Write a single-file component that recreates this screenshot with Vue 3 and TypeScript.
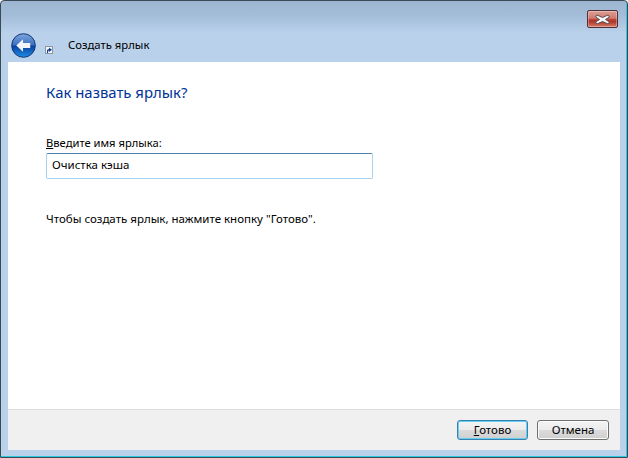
<script setup lang="ts">
const title = 'Создать ярлык'
</script>

<template>
  <div class="window">
    <header class="chrome-top">
      <div class="caption">
        <button class="close" aria-label="Закрыть">
          <svg width="17" height="11" viewBox="0 0 17 11">
            <path d="M3 1 L8.5 3.5 L14 1 L15.5 3 L11.5 5.5 L15.5 8 L14 10 L8.5 7.5 L3 10 L1.5 8 L5.5 5.5 L1.5 3 Z" fill="#f4f6f8" stroke="#5b4a52" stroke-width="1" />
          </svg>
        </button>
      </div>
      <div class="nav">
        <svg class="back" width="25" height="25" viewBox="0 0 26 26">
          <defs>
            <linearGradient id="orb" x1="0" y1="0" x2="0" y2="1">
              <stop offset="0" stop-color="#7fa6dc" />
              <stop offset="0.48" stop-color="#3b6fc0" />
              <stop offset="0.52" stop-color="#0a3f9c" />
              <stop offset="1" stop-color="#1f8fe8" />
            </linearGradient>
          </defs>
          <circle cx="13" cy="13" r="12.3" fill="url(#orb)" stroke="#14356f" stroke-width="1" />
          <path d="M5.5 13 L12.5 6.5 V10.5 H20 V15.5 H12.5 V19.5 Z" fill="#f2f6fb" />
        </svg>
        <svg class="shortcut" width="8" height="8" viewBox="0 0 8 8">
          <rect x="0.5" y="0.5" width="7" height="7" fill="#f4f6f8" stroke="#8a96a6" />
          <path d="M2 7 V4.5 Q2 3 4 3 V1.5 L7 3.8 L4 6 V4.6 Q3 4.6 3 7 Z" fill="#17408f" />
        </svg>
        <span class="title">{{ title }}</span>
      </div>
    </header>

    <main class="content">
      <h1 class="heading">Как назвать ярлык?</h1>
      <label class="field-label"><u>В</u>ведите имя ярлыка:</label>
      <div class="input">Очистка кэша</div>
      <p class="hint">Чтобы создать ярлык, нажмите кнопку "Готово".</p>
    </main>

    <footer class="footer">
      <button class="btn primary"><u>Г</u>отово</button>
      <button class="btn">Отмена</button>
    </footer>
  </div>
</template>

<style>
html, body { margin: 0; padding: 0; overflow: hidden; background: #fff; }
</style>

<style scoped>
.window {
  width: 628px;
  height: 458px;
  box-sizing: border-box;
  display: flex;
  flex-direction: column;
  position: relative;
  background: linear-gradient(#9db7d2 0, #a3bcd8 14px, #b9d1ea 32px, #b9d1ea 100%);
  border: 1px solid #3a4a55;
  border-radius: 4px 4px 0 0;
  box-shadow: inset -1px -1px 0 #2cc8e2;
  padding: 0 7px 7px 7px;
  font-family: "Noto Sans", "Open Sans", sans-serif;
  font-size: 11.5px;
  color: #000;
}
.chrome-top {
  height: 61px;
  flex: none;
  display: flex;
  flex-direction: column;
}
.caption {
  display: flex;
  justify-content: flex-end;
  height: 23px;
  padding-top: 9px;
  padding-right: 2px;
  flex: none;
}
.close {
  width: 31px;
  height: 18px;
  padding: 0;
  box-sizing: border-box;
  border: 1px solid #4f2f38;
  border-radius: 2px;
  background: linear-gradient(#dc9f95 0, #d17a6c 45%, #b6392b 55%, #b23b2e 70%, #d8806e 100%);
  box-shadow: inset 0 0 0 1px rgba(255, 255, 255, 0.3);
  display: flex;
  align-items: center;
  justify-content: center;
}
.nav {
  display: flex;
  align-items: center;
  height: 25px;
  margin-left: 3px;
}
.back { flex: none; }
.shortcut { flex: none; margin-left: 9px; margin-top: 9px; }
.title {
  margin-left: 15px;
  margin-bottom: 2px;
  line-height: 16px;
  font-size: 11.3px;
}
.content {
  flex: 1;
  background: #fff;
  padding: 20px 38px 0 38px;
  min-height: 0;
}
.heading {
  margin: 0;
  font-weight: 400;
  font-size: 14.9px;
  line-height: 20px;
  color: #003399;
}
.field-label {
  display: block;
  margin-top: 33px;
  line-height: 16px;
  font-size: 11.2px;
}
.input {
  margin-top: 2px;
  width: 327px;
  height: 26px;
  box-sizing: border-box;
  border: 1px solid #a9d2ee;
  border-top-color: #4f7fa6;
  border-radius: 2px;
  padding-left: 5px;
  line-height: 22px;
  background: #fff;
}
.hint {
  margin: 32px 0 0;
  line-height: 16px;
}
.footer {
  flex: none;
  height: 41px;
  box-sizing: border-box;
  background: #f0f0f0;
  border-top: 1px solid #dfdfdf;
  display: flex;
  justify-content: flex-end;
  align-items: flex-start;
  gap: 9px;
  padding: 10px 11px 0 0;
}
.btn {
  width: 72px;
  height: 20px;
  padding: 0;
  box-sizing: border-box;
  font: inherit;
  color: #000;
  line-height: 16px;
  border: 1px solid #707070;
  border-radius: 3px;
  background: linear-gradient(#f4f4f4 0, #ebebeb 48%, #dbdbdb 52%, #cfcfcf 100%);
  box-shadow: inset 0 0 0 1px #fbfbfb;
}
.btn.primary {
  width: 71px;
  border-color: #3c7fb1;
  box-shadow: inset 0 0 0 1px #62d0f0;
}
</style>
